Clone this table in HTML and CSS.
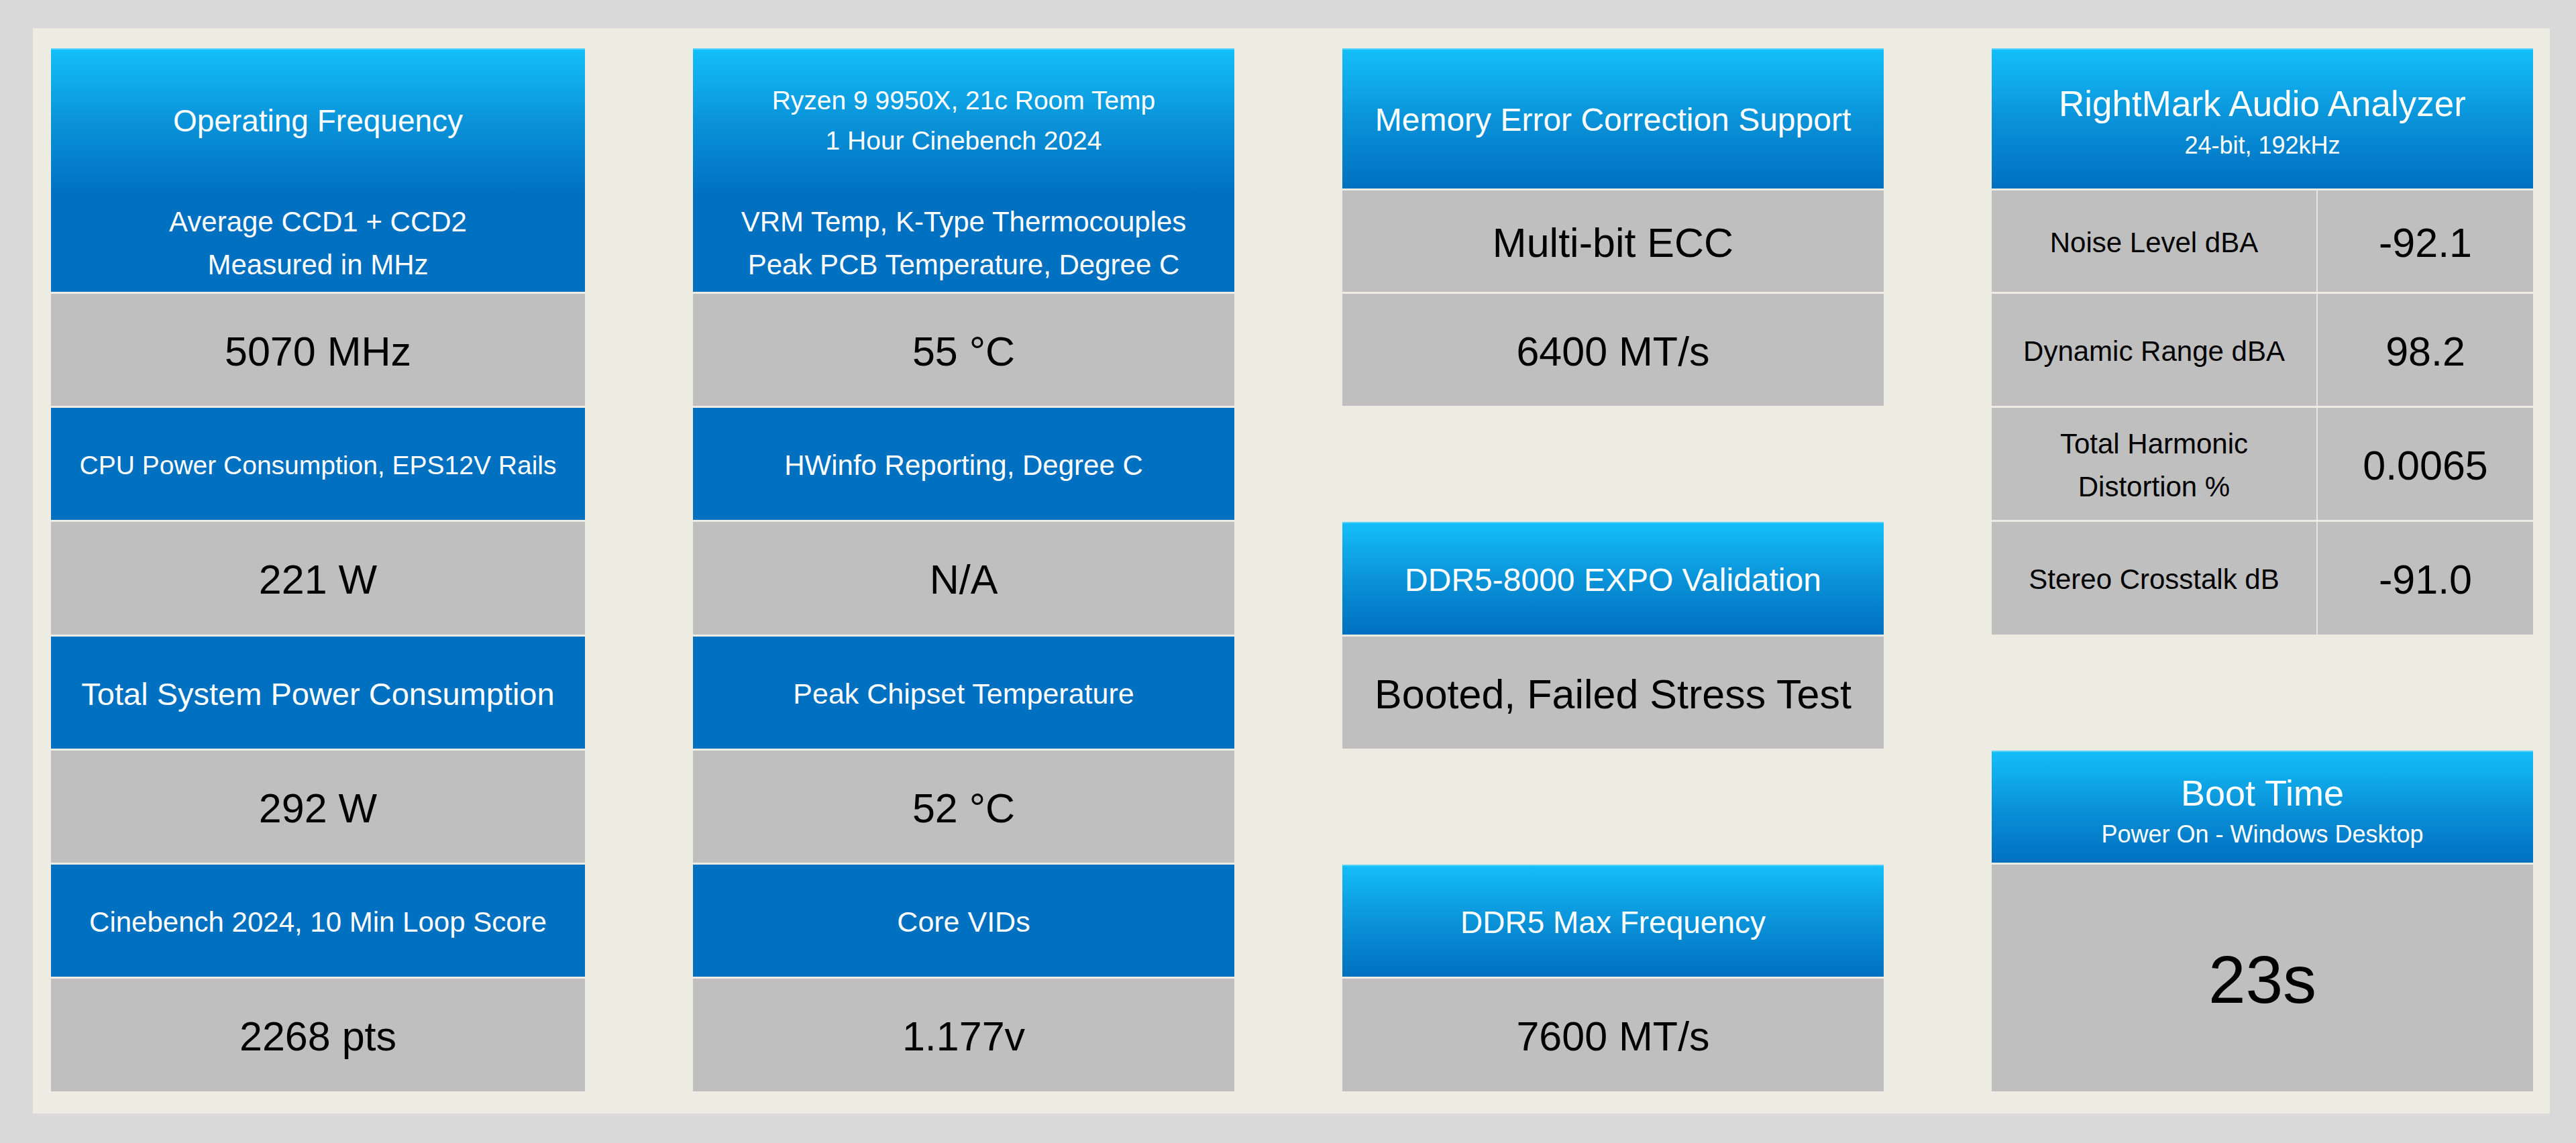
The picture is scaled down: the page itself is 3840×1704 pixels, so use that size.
FILE: index.html
```html
<!DOCTYPE html>
<html lang="en">
<head>
<meta charset="utf-8">
<title>Motherboard Test Results</title>
<link rel="stylesheet" href="styles.css">
</head>
<body>
<div class="panel">
  <div class="board">

    <div class="col">
      <div class="cell grad tall">
        <div class="part"><span class="fs-46">Operating Frequency</span></div>
        <div class="part"><span class="fs-42 lh">Average CCD1 + CCD2<br>Measured in MHz</span></div>
      </div>
      <div class="cell val">5070 MHz</div>
      <div class="cell blue fs-39">CPU Power Consumption, EPS12V Rails</div>
      <div class="cell val">221 W</div>
      <div class="cell blue fs-47">Total System Power Consumption</div>
      <div class="cell val">292 W</div>
      <div class="cell blue fs-42">Cinebench 2024, 10 Min Loop Score</div>
      <div class="cell val">2268 pts</div>
    </div>

    <div class="col">
      <div class="cell grad tall">
        <div class="part"><span class="fs-39 lh">Ryzen 9 9950X, 21c Room Temp<br>1 Hour Cinebench 2024</span></div>
        <div class="part"><span class="fs-42 lh">VRM Temp, K-Type Thermocouples<br>Peak PCB Temperature, Degree C</span></div>
      </div>
      <div class="cell val">55 °C</div>
      <div class="cell blue fs-42">HWinfo Reporting, Degree C</div>
      <div class="cell val">N/A</div>
      <div class="cell blue fs-43">Peak Chipset Temperature</div>
      <div class="cell val">52 °C</div>
      <div class="cell blue fs-43">Core VIDs</div>
      <div class="cell val">1.177v</div>
    </div>

    <div class="col">
      <div class="cell grad fs-48 at-1">Memory Error Correction Support</div>
      <div class="cell val at-2">Multi-bit ECC</div>
      <div class="cell val at-3">6400 MT/s</div>
      <div class="cell grad fs-48 at-5">DDR5-8000 EXPO Validation</div>
      <div class="cell val at-6">Booted, Failed Stress Test</div>
      <div class="cell grad fs-46 at-8">DDR5 Max Frequency</div>
      <div class="cell val at-9">7600 MT/s</div>
    </div>

    <div class="col">
      <div class="cell grad stack at-1">
        <span class="fs-53">RightMark Audio Analyzer</span>
        <span class="fs-36">24-bit, 192kHz</span>
      </div>
      <div class="pair at-2">
        <div class="cell label">Noise Level dBA</div>
        <div class="cell val">-92.1</div>
      </div>
      <div class="pair at-3">
        <div class="cell label">Dynamic Range dBA</div>
        <div class="cell val">98.2</div>
      </div>
      <div class="pair at-4">
        <div class="cell label lh">Total Harmonic<br>Distortion %</div>
        <div class="cell val">0.0065</div>
      </div>
      <div class="pair at-5">
        <div class="cell label">Stereo Crosstalk dB</div>
        <div class="cell val">-91.0</div>
      </div>
      <div class="cell grad stack at-7">
        <span class="fs-54">Boot Time</span>
        <span class="fs-36">Power On - Windows Desktop</span>
      </div>
      <div class="cell val big at-8 span-2">23s</div>
    </div>

  </div>
</div>
</body>
</html>
```

FILE: styles.css
```css
html, body {
  margin: 0;
  padding: 0;
}

body {
  background: #d9d9d9;
  font-family: "Liberation Sans", Arial, sans-serif;
  width: 3840px;
  height: 1704px;
  overflow: hidden;
}

.panel {
  margin: 42px 0 0 49px;
  width: 3752px;
  height: 1618px;
  box-sizing: border-box;
  padding: 30px 25px 33px 27px;
  background: #edece3;
}

.board {
  display: flex;
  gap: 161px;
}

.col {
  width: 807px;
  display: grid;
  grid-template-rows: 209px 151px 167px 167px 168px 167px 167px 167px 168px;
  row-gap: 3px;
}

.col:first-child {
  width: 796px;
}

.cell {
  display: flex;
  align-items: center;
  justify-content: center;
  text-align: center;
  box-sizing: border-box;
  padding-top: 4px;
}

.grad {
  color: #ffffff;
  background: linear-gradient(to bottom, #14bff9 0%, #0a93d9 50%, #0070c0 100%);
  box-shadow: inset 0 2px 0 #58d2fb;
}

.grad.tall {
  grid-row: span 2;
  display: grid;
  grid-template-rows: 209px 151px;
  row-gap: 3px;
  padding-top: 0;
  background: linear-gradient(to bottom, #14bff9 0px, #0a93d9 110px, #0070c0 220px, #0070c0 100%);
}

.part {
  display: flex;
  align-items: center;
  justify-content: center;
  padding-top: 6px;
}

.blue {
  color: #ffffff;
  background: #0070c0;
}

.val {
  background: #bfbfbf;
  color: #000000;
  font-size: 61px;
}

.val.big {
  font-size: 100px;
}

.span-2 {
  grid-row-end: span 2;
}

.at-1 { grid-row-start: 1; }
.at-2 { grid-row-start: 2; }
.at-3 { grid-row-start: 3; }
.at-4 { grid-row-start: 4; }
.at-5 { grid-row-start: 5; }
.at-6 { grid-row-start: 6; }
.at-7 { grid-row-start: 7; }
.at-8 { grid-row-start: 8; }
.at-9 { grid-row-start: 9; }

.stack {
  flex-direction: column;
  gap: 10px;
  padding-top: 10px;
}

.stack span {
  line-height: 1.15;
}

.pair {
  display: grid;
  grid-template-columns: 484px 1fr;
  column-gap: 2px;
  background: #e6e6e6;
}

.label {
  background: #bfbfbf;
  color: #000000;
  font-size: 42px;
}

.lh {
  line-height: 1.52;
}

.fs-36 { font-size: 36px; }
.fs-39 { font-size: 39px; }
.fs-42 { font-size: 42px; }
.fs-43 { font-size: 43px; }
.fs-46 { font-size: 46px; }
.fs-47 { font-size: 47px; }
.fs-48 { font-size: 48px; }
.fs-53 { font-size: 53px; }
.fs-54 { font-size: 54px; }
```
